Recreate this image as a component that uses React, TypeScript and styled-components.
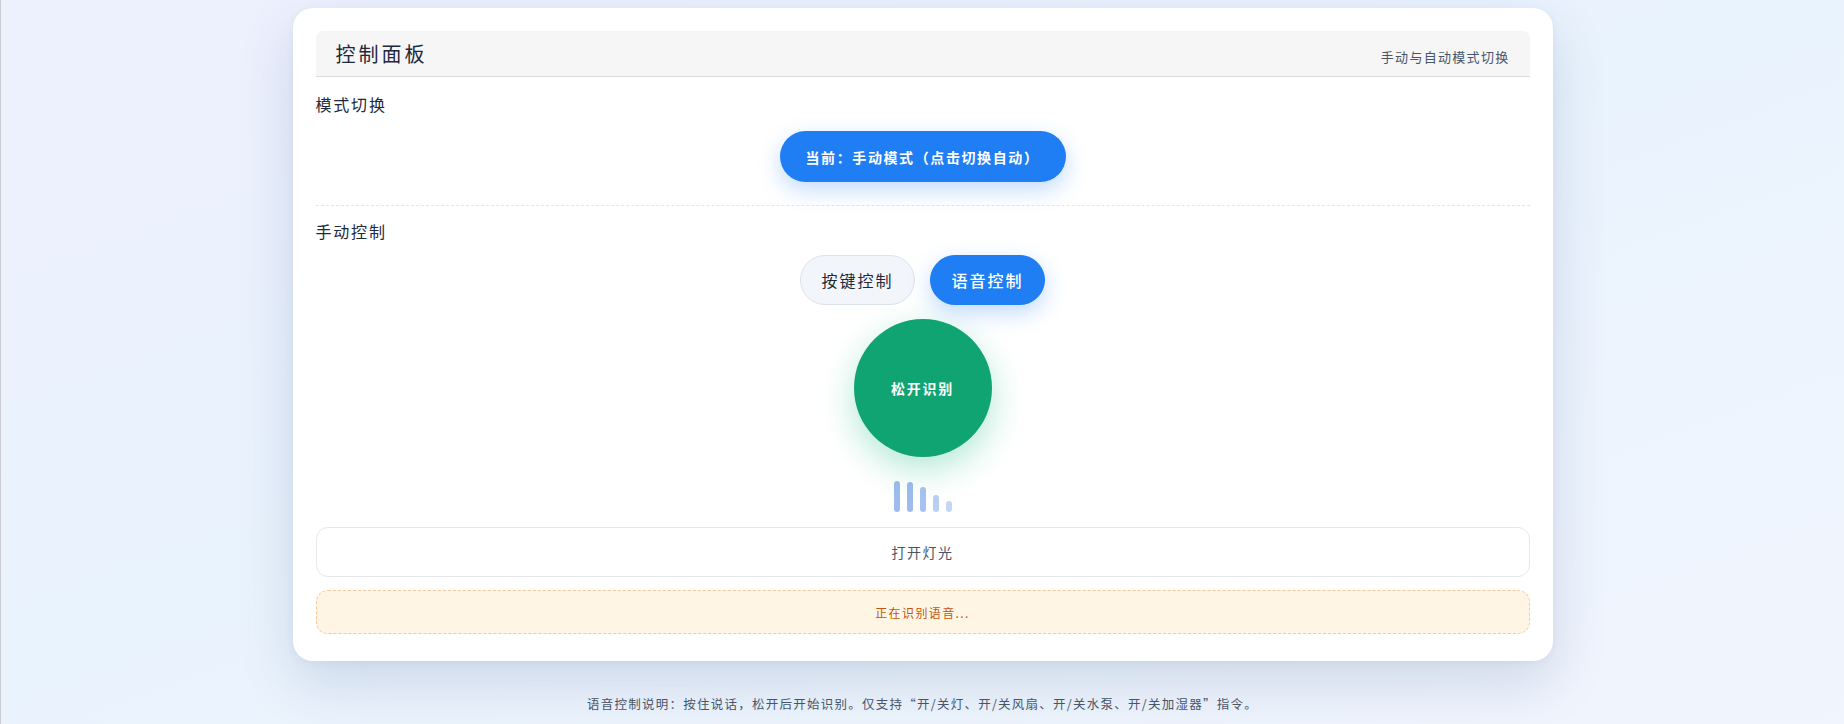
import * as React from 'react'
import styled, { createGlobalStyle } from 'styled-components'

const GlobalStyle = createGlobalStyle`
  html, body {
    margin: 0;
    padding: 0;
  }
  body {
    font-family: "Noto Sans CJK SC", "Noto Sans", sans-serif;
    background: linear-gradient(160deg, #eef0fd 0%, #e9f3fd 45%, #f1f5fd 100%);
    min-height: 724px;
  }
`

const Page = styled.div`
  min-height: 724px;
  box-sizing: border-box;
  padding-top: 8px;
  border-left: 1px solid #c8cbd0;
  display: flex;
  flex-direction: column;
  align-items: center;
`

const Card = styled.div`
  width: 1260px;
  box-sizing: border-box;
  background: #fff;
  border-radius: 20px;
  padding: 23px 23px 27px;
  box-shadow: 0 22px 55px rgba(40, 70, 120, 0.16), 0 2px 8px rgba(40, 70, 120, 0.05);
`

const Header = styled.div`
  height: 46px;
  box-sizing: border-box;
  background: #f6f6f6;
  border-bottom: 1px solid #dcdcdc;
  border-radius: 7px 7px 0 0;
  padding: 0 20px;
  display: flex;
  justify-content: space-between;
  align-items: center;
`

const Title = styled.h1`
  margin: 0;
  font-size: 20px;
  font-weight: 400;
  letter-spacing: 3px;
  color: #1e293b;
`

const Subtitle = styled.span`
  font-size: 13px;
  letter-spacing: 1.3px;
  color: #475569;
  margin-top: 5px;
`

const Label = styled.div<{ $top: number }>`
  margin-top: ${p => p.$top}px;
  font-size: 16px;
  line-height: 18px;
  letter-spacing: 1.8px;
  color: #1e293b;
`

const Center = styled.div<{ $top: number; $gap?: number }>`
  margin-top: ${p => p.$top}px;
  display: flex;
  justify-content: center;
  align-items: flex-end;
  gap: ${p => p.$gap ?? 0}px;
`

const ModeButton = styled.button`
  height: 51px;
  padding: 0 26px;
  border: none;
  border-radius: 26px;
  background: #1f7ef4;
  color: #fff;
  font-family: inherit;
  font-size: 14px;
  font-weight: 700;
  letter-spacing: 1.6px;
  box-shadow: 0 8px 22px rgba(31, 126, 244, 0.28);
  cursor: pointer;
`

const Divider = styled.hr`
  margin: 23px 0 0;
  border: none;
  border-top: 1px dashed #e2e6ec;
`

const Toggle = styled.button<{ $active?: boolean }>`
  width: 115px;
  height: 50px;
  box-sizing: border-box;
  border-radius: 25px;
  font-family: inherit;
  font-size: 16px;
  letter-spacing: 2px;
  cursor: pointer;
  border: 1px solid ${p => (p.$active ? '#1f7ef4' : '#dde3ec')};
  background: ${p => (p.$active ? '#1f7ef4' : '#f2f5fa')};
  color: ${p => (p.$active ? '#fff' : '#1f2937')};
  font-weight: ${p => (p.$active ? 500 : 400)};
  box-shadow: ${p => (p.$active ? '0 8px 22px rgba(31, 126, 244, 0.28)' : 'none')};
`

const MicButton = styled.button`
  width: 138px;
  height: 138px;
  border-radius: 50%;
  border: none;
  background: #10a472;
  color: #fff;
  font-family: inherit;
  font-size: 14px;
  font-weight: 700;
  letter-spacing: 1.8px;
  box-shadow: 0 12px 34px rgba(16, 185, 129, 0.32);
  cursor: pointer;
`

const Bar = styled.span<{ $h: number; $o: number }>`
  width: 6px;
  height: ${p => p.$h}px;
  border-radius: 3px;
  background: rgba(59, 120, 220, ${p => p.$o});
`

const Result = styled.div`
  margin-top: 15px;
  height: 50px;
  box-sizing: border-box;
  border: 1px solid #e5e7eb;
  border-radius: 12px;
  display: flex;
  align-items: center;
  justify-content: center;
  font-size: 14px;
  letter-spacing: 1.5px;
  color: #4b5563;
`

const Status = styled.div`
  margin-top: 13px;
  height: 44px;
  box-sizing: border-box;
  border: 1px dashed #fcc89b;
  border-radius: 12px;
  background: #fef5e5;
  display: flex;
  align-items: center;
  justify-content: center;
  font-size: 12px;
  letter-spacing: 1.4px;
  color: #c2570c;
`

const Footer = styled.p`
  margin: 33px 0 0;
  font-size: 12.5px;
  letter-spacing: 1.25px;
  color: #475569;
`

const bars = [
  { h: 31, o: 0.5 },
  { h: 30, o: 0.5 },
  { h: 25, o: 0.45 },
  { h: 17, o: 0.36 },
  { h: 11, o: 0.3 },
]

export default function App() {
  return (
    <>
      <GlobalStyle />
      <Page>
        <Card>
          <Header>
            <Title>控制面板</Title>
            <Subtitle>手动与自动模式切换</Subtitle>
          </Header>

          <Label $top={18}>模式切换</Label>
          <Center $top={18}>
            <ModeButton>当前：手动模式（点击切换自动）</ModeButton>
          </Center>

          <Divider />

          <Label $top={16}>手动控制</Label>
          <Center $top={15} $gap={15}>
            <Toggle>按键控制</Toggle>
            <Toggle $active>语音控制</Toggle>
          </Center>

          <Center $top={14}>
            <MicButton>松开识别</MicButton>
          </Center>

          <Center $top={24} $gap={7}>
            {bars.map((b, i) => (
              <Bar key={i} $h={b.h} $o={b.o} />
            ))}
          </Center>

          <Result>打开灯光</Result>
          <Status>正在识别语音...</Status>
        </Card>
        <Footer>语音控制说明：按住说话，松开后开始识别。仅支持“开/关灯、开/关风扇、开/关水泵、开/关加湿器”指令。</Footer>
      </Page>
    </>
  )
}
